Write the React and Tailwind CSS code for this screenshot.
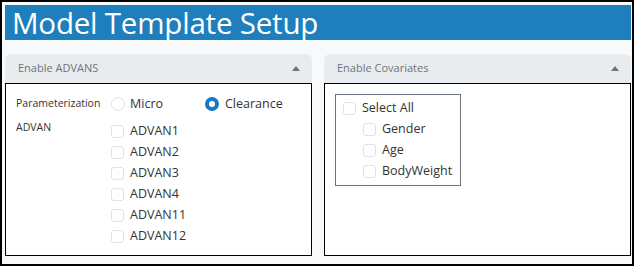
import React from "react";

const font = { fontFamily: '"Open Sans", "Noto Sans", sans-serif' };

const Box = ({ className = "" }) => (
  <span
    className={`inline-block w-[13px] h-[13px] rounded-[3px] border border-[#dee2e6] bg-white shrink-0 ${className}`}
  />
);

const Caret = () => (
  <svg width="8" height="5" viewBox="0 0 8 5">
    <path d="M0 5 L4 0 L8 5 Z" fill="#6c757d" />
  </svg>
);

const PanelHead = ({ title }) => (
  <div className="h-[29px] bg-[#e9ecef] rounded-t-md flex items-center justify-between pl-[13px] pr-[12px]">
    <span className="text-[11px] text-[#6c757d]">{title}</span>
    <Caret />
  </div>
);

const advans = ["ADVAN1", "ADVAN2", "ADVAN3", "ADVAN4", "ADVAN11", "ADVAN12"];
const covs = ["Gender", "Age", "BodyWeight"];

export default function App() {
  return (
    <div
      style={font}
      className="w-[634px] h-[266px] border-2 border-black bg-[#f8f9fa] pl-[3px] pr-px pt-[3px] flex flex-col"
    >
      <div className="h-[35px] bg-[#1f7fbd] flex items-center pl-[7px]">
        <h1 className="text-[29.5px] leading-none text-white tracking-[-0.2px]">
          Model Template Setup
        </h1>
      </div>

      <div className="mt-[14px] flex gap-[12px]">
        <div className="w-[307px]">
          <PanelHead title="Enable ADVANS" />
          <div className="h-[173px] border border-black bg-white pl-[10px] pt-[12px]">
            <div className="flex items-center h-[16px]">
              <span className="w-[95px] text-[10.5px] text-[#333]">Parameterization</span>
              <div className="flex items-center w-[94px]">
                <span className="w-[14px] h-[14px] rounded-full border border-[#dee2e6] bg-white" />
                <span className="ml-[5px] text-[12.5px] text-[#333]">Micro</span>
              </div>
              <div className="flex items-center">
                <span className="w-[14px] h-[14px] rounded-full border-[4px] border-[#1a78c2] bg-white" />
                <span className="ml-[6px] text-[12.5px] text-[#333]">Clearance</span>
              </div>
            </div>
            <div className="flex mt-[6px]">
              <span className="w-[95px] text-[10.5px] text-[#333] pt-[2px]">ADVAN</span>
              <div className="flex flex-col pt-[3px]">
                {advans.map((a) => (
                  <div key={a} className="flex items-center h-[21px]">
                    <Box />
                    <span className="ml-[6px] text-[12.5px] text-[#333]">{a}</span>
                  </div>
                ))}
              </div>
            </div>
          </div>
        </div>

        <div className="w-[307px]">
          <PanelHead title="Enable Covariates" />
          <div className="h-[173px] border border-black bg-white pl-[10px] pt-[10px]">
            <div className="w-[126px] h-[92px] border border-[#6c757d] pl-[7px] pt-[3px]">
              <div className="flex items-center h-[21px]">
                <Box />
                <span className="ml-[6px] text-[12.5px] text-[#333]">Select All</span>
              </div>
              {covs.map((c) => (
                <div key={c} className="flex items-center h-[21px] pl-[20px]">
                  <Box />
                  <span className="ml-[6px] text-[12.5px] text-[#333]">{c}</span>
                </div>
              ))}
            </div>
          </div>
        </div>
      </div>
    </div>
  );
}
